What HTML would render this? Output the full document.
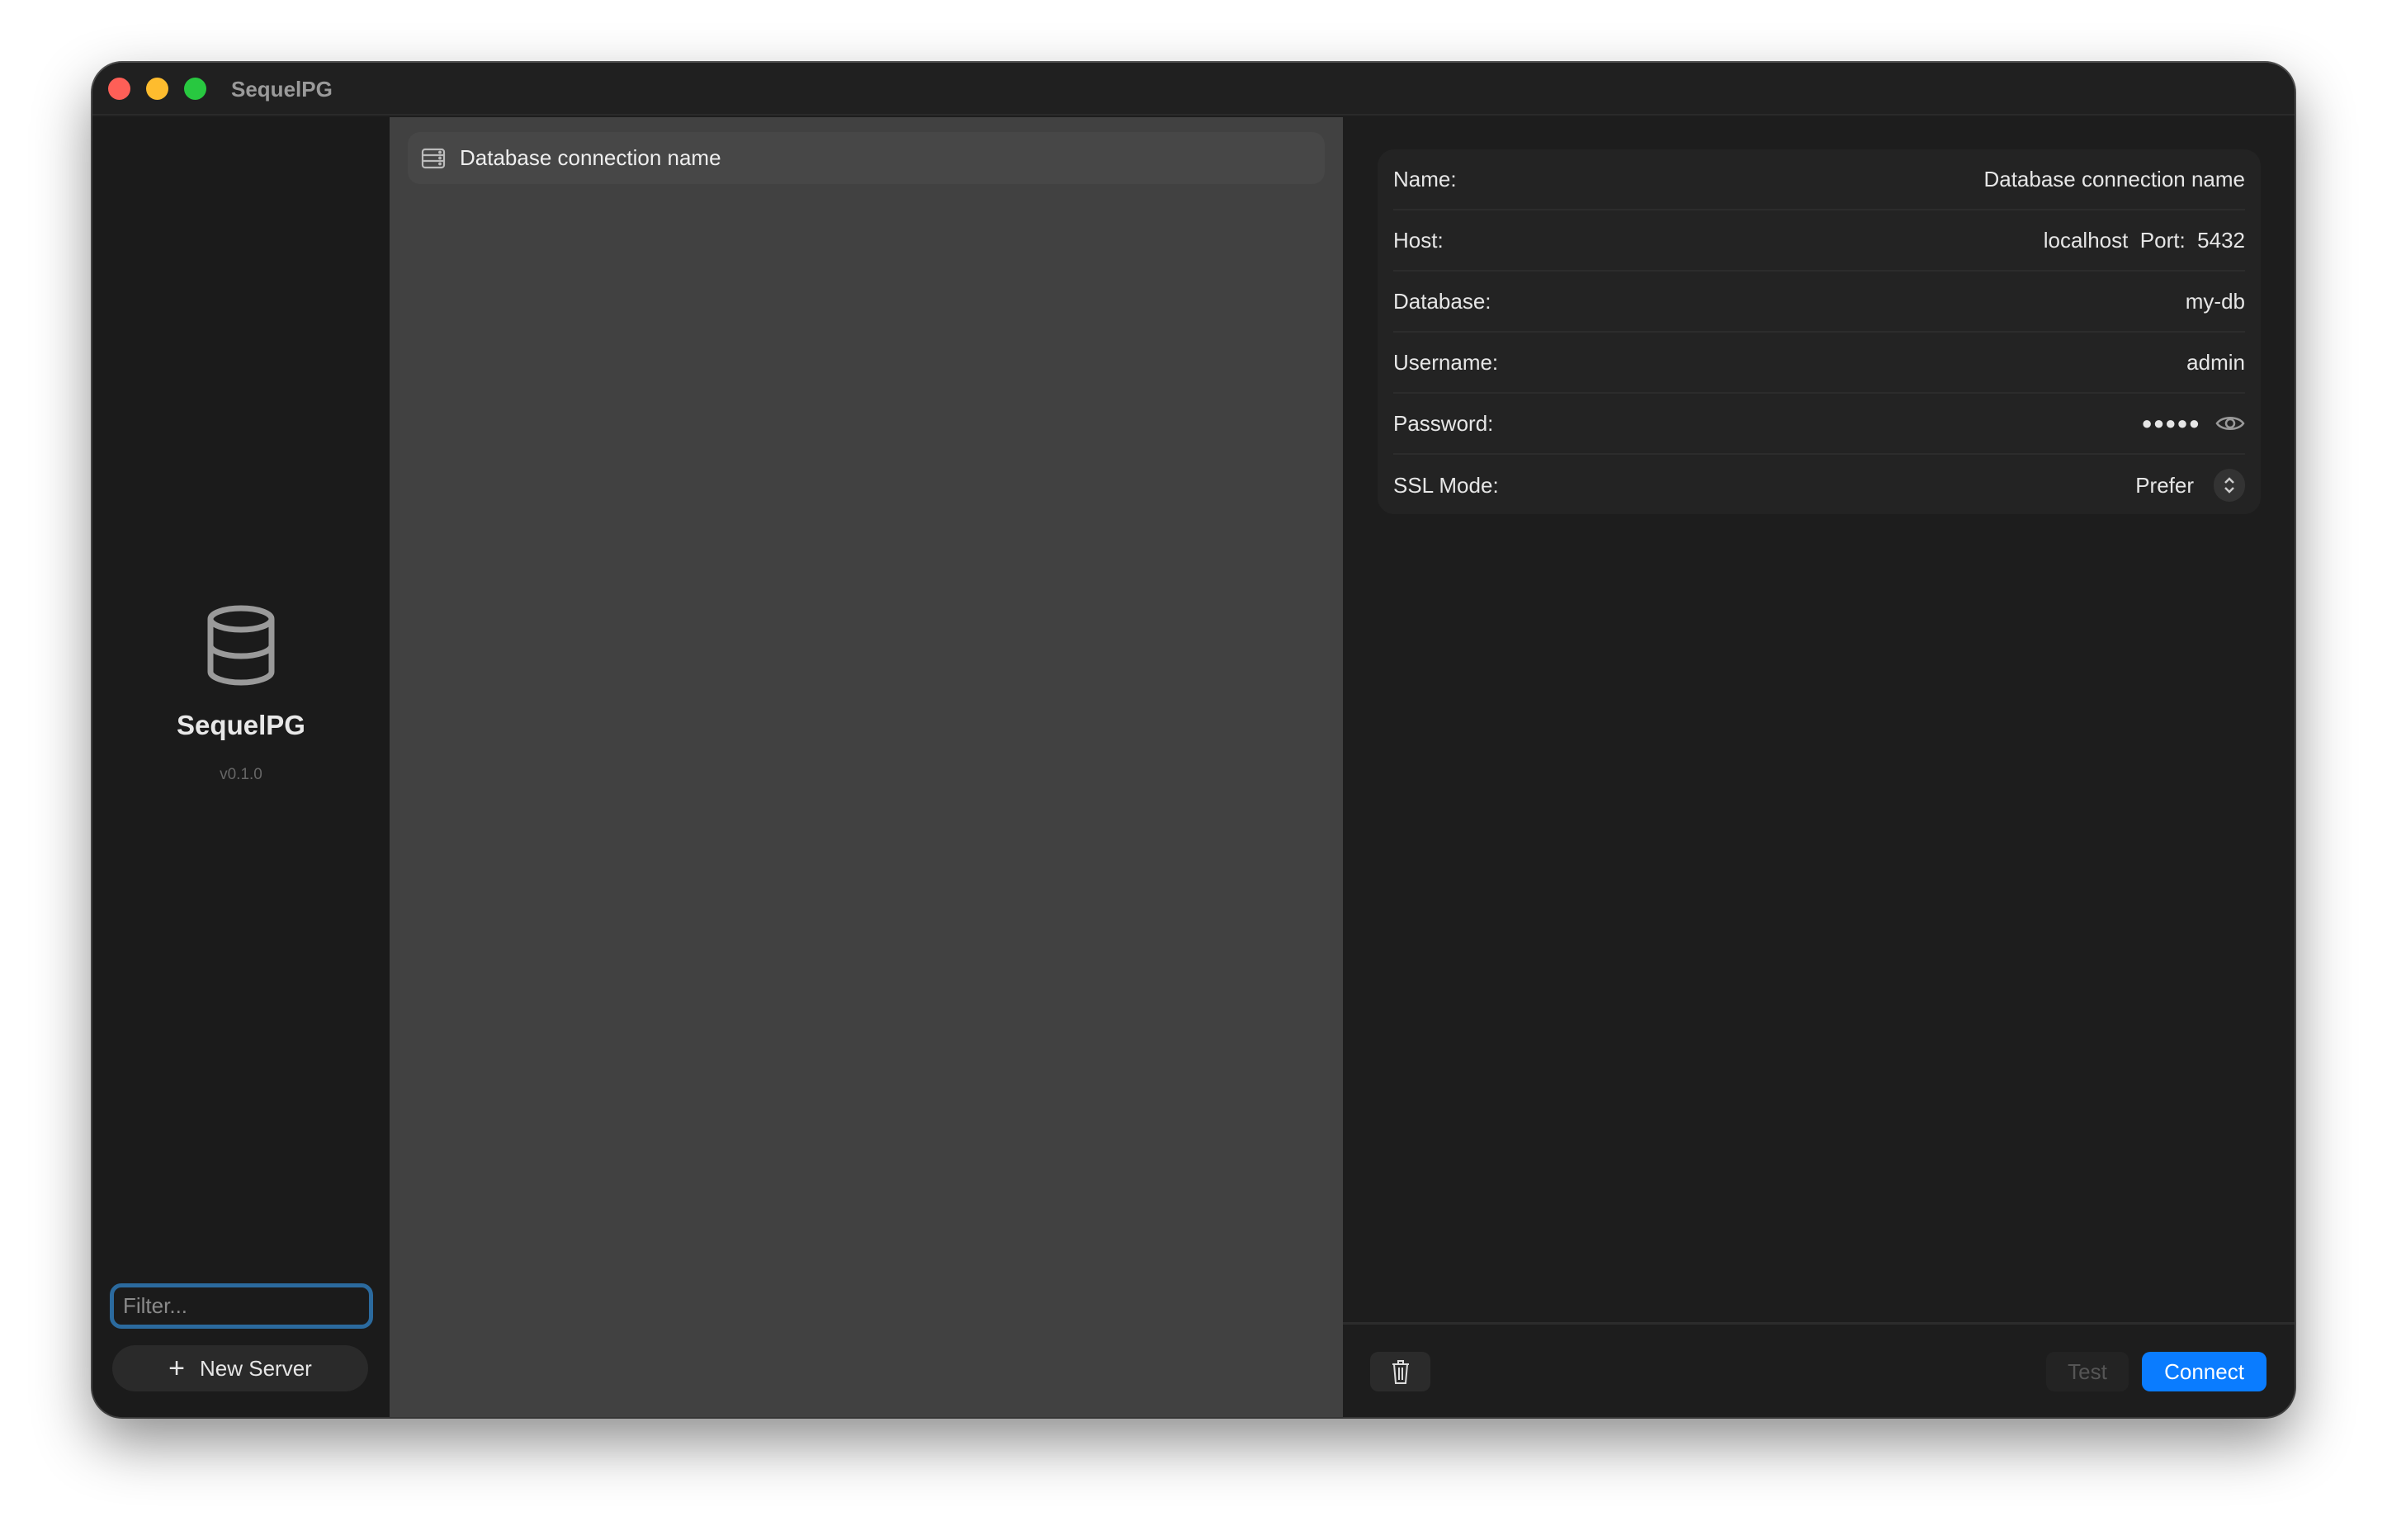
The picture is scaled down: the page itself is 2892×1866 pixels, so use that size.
<!DOCTYPE html>
<html><head><meta charset="utf-8"><style>
*{margin:0;padding:0;box-sizing:border-box}
body{width:2892px;height:1866px;background:#fff;position:relative;overflow:hidden;font-family:"Liberation Sans",sans-serif;color:#e6e6e6}
.win{position:absolute;left:112px;top:76px;width:2668px;height:1641px;border-radius:36px;background:#1d1d1d;overflow:hidden;box-shadow:0 30px 70px rgba(0,0,0,.45),0 0 0 2px #555}
.tb{position:absolute;left:0;top:0;width:100%;height:64px;background:#202020;border-bottom:2px solid #2a2a2a}
.dot{position:absolute;top:18px;width:27px;height:27px;border-radius:50%}
.title{position:absolute;left:168px;top:17px;font-size:26px;font-weight:bold;color:#9a9a9a}
.side{position:absolute;left:0;top:66px;width:360px;bottom:0;background:#1b1b1b}
.mid{position:absolute;left:360px;top:66px;width:1155px;bottom:0;background:#414141}
.right{position:absolute;left:1515px;top:66px;right:0;bottom:0;background:#1d1d1d}
.row{position:absolute;left:22px;top:18px;width:1111px;height:63px;background:#474747;border-radius:15px}
.form{position:absolute;left:42px;top:39px;width:1070px;height:442px;background:#232323;border-radius:20px}
.fr{position:absolute;left:19px;right:19px;height:74px;border-bottom:2px solid #2c2c2c;font-size:26px;display:flex;align-items:center;justify-content:space-between}
.btn{position:absolute;top:1496px;height:48px;border-radius:10px;font-size:26px;display:flex;align-items:center;justify-content:center}
</style></head><body>
<div class="win">
 <div class="tb">
  <div class="dot" style="left:19px;background:#fe5f57"></div>
  <div class="dot" style="left:65px;background:#febc2e"></div>
  <div class="dot" style="left:111px;background:#28c840"></div>
  <div class="title">SequelPG</div>
 </div>
 <div class="side">
  <svg style="position:absolute;left:138px;top:590px" width="84" height="100" viewBox="0 0 84 100" fill="none" stroke="#9a9a9a" stroke-width="7">
   <ellipse cx="42" cy="18" rx="37" ry="13"/>
   <path d="M5 18v64c0 7 17 13 37 13s37-6 37-13V18"/>
   <path d="M5 50c0 7 17 13 37 13s37-6 37-13"/>
  </svg>
  <div style="position:absolute;left:0;width:360px;top:718px;text-align:center;font-size:33px;font-weight:bold;color:#e8e8e8">SequelPG</div>
  <div style="position:absolute;left:0;width:360px;top:786px;text-align:center;font-size:19px;color:#666">v0.1.0</div>
  <div style="position:absolute;left:21px;top:1413px;width:319px;height:55px;border:5px solid #2b6a9e;border-radius:14px;background:#1b1b1b;font-size:26px;color:#8a8a8a;padding:7px 11px">Filter...</div>
  <div style="position:absolute;left:24px;top:1488px;width:310px;height:56px;border-radius:28px;background:#2a2a2a;font-size:26px;display:flex;align-items:center;justify-content:center;color:#e6e6e6"><span style="font-size:34px;font-weight:300;margin-right:18px">+</span>New Server</div>
 </div>
 <div class="mid">
  <div class="row">
   <svg style="position:absolute;left:16px;top:19px" width="30" height="26" viewBox="0 0 30 26" fill="none" stroke="#bbb" stroke-width="2.2"><rect x="2" y="2" width="26" height="22" rx="3"/><path d="M2 9h26M2 16h26"/><circle cx="23" cy="5.5" r=".8" fill="#bbb"/><circle cx="23" cy="12.5" r=".8" fill="#bbb"/><circle cx="23" cy="19.5" r=".8" fill="#bbb"/></svg>
   <div style="position:absolute;left:63px;top:16px;font-size:26px;color:#eee">Database connection name</div>
  </div>
 </div>
 <div class="right">
  <div class="form">
   <div class="fr" style="top:0"><span>Name:</span><span>Database connection name</span></div>
   <div class="fr" style="top:74px"><span>Host:</span><span>localhost&nbsp;&nbsp;Port:&nbsp;&nbsp;5432</span></div>
   <div class="fr" style="top:148px"><span>Database:</span><span>my-db</span></div>
   <div class="fr" style="top:222px"><span>Username:</span><span>admin</span></div>
   <div class="fr" style="top:296px"><span>Password:</span><span style="display:flex;align-items:center"><span style="letter-spacing:1px;font-size:22px">●●●●●</span><svg style="margin-left:18px" width="36" height="24" viewBox="0 0 36 24" fill="none" stroke="#999" stroke-width="2.5"><path d="M2 12C8 3 28 3 34 12C28 21 8 21 2 12Z"/><circle cx="18" cy="12" r="5"/></svg></span></div>
   <div class="fr" style="top:370px;border-bottom:none"><span>SSL Mode:</span><span style="display:flex;align-items:center">Prefer<span style="margin-left:24px;width:38px;height:40px;border-radius:19px;background:#333;display:inline-flex;align-items:center;justify-content:center"><svg width="16" height="24" viewBox="0 0 16 24" fill="none" stroke="#ccc" stroke-width="2.5"><path d="M3 9l5-5 5 5M3 15l5 5 5-5"/></svg></span></span></div>
  </div>
  <div style="position:absolute;left:0;right:0;top:1460px;height:3px;background:#2c2c2c"></div>
  <div class="btn" style="left:33px;width:73px;background:#2b2b2b"><svg width="24" height="32" viewBox="0 0 24 32" fill="none" stroke="#ddd" stroke-width="2"><path d="M2 7h20M9 7V3h6v4M4 7l2 23h12l2-23M10 11v15M14 11v15"/></svg></div>
  <div class="btn" style="left:852px;width:100px;background:#232323;color:#555">Test</div>
  <div class="btn" style="left:968px;width:151px;background:#0a7cff;color:#fff">Connect</div>
 </div>
</div>
</body></html>
